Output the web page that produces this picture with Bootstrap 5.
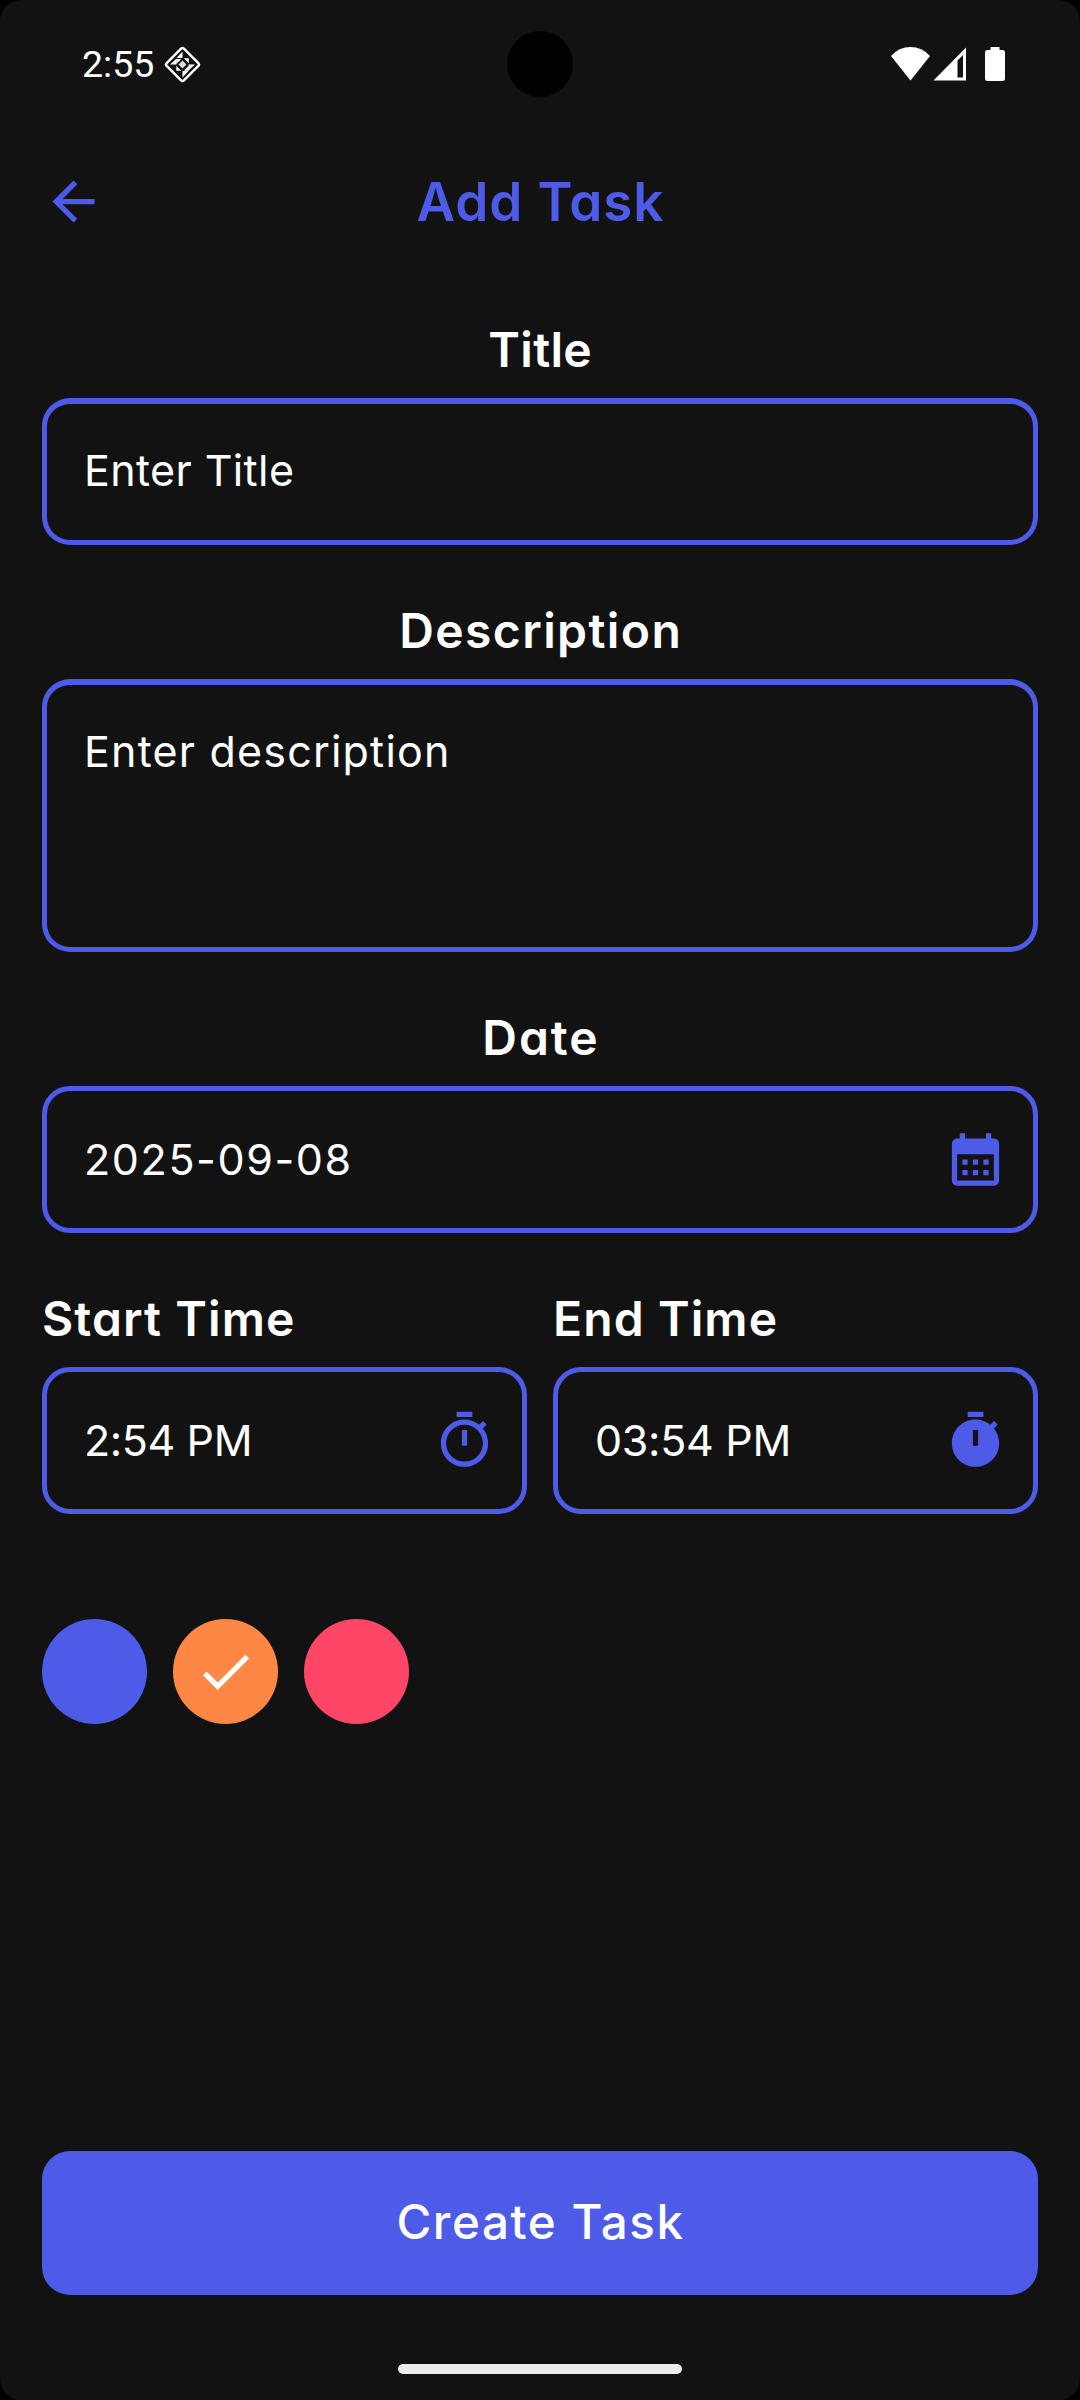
<!DOCTYPE html>
<html lang="en">
<head>
<meta charset="utf-8">
<meta name="viewport" content="width=device-width, initial-scale=1">
<title>Add Task</title>
<link href="https://cdn.jsdelivr.net/npm/bootstrap@5.3.0/dist/css/bootstrap.min.css" rel="stylesheet">
<style>
  :root { --accent: #4e5ae8; --surface: #121212; }
  html, body { background: #000; }
  body { margin: 0; font-family: Inter, "Open Sans", sans-serif; font-feature-settings: "cv11"; color: #fff; }
  .screen { width: 1080px; height: 2400px; background: var(--surface); border-radius: 21px; overflow: hidden; }
  .status-bar { height: 128px; padding: 0 75px 0 82px; }
  .clock { font: 400 37.5px/44px Roboto, sans-serif; margin-right: 9px; }
  .camera { width: 66px; height: 66px; background: #000; top: 31px; left: 507px; }
  .app-bar { height: 147px; padding: 0 42px; color: var(--accent); }
  .app-bar .side { width: 63px; }
  .app-title { font-size: 53px; font-weight: 600; line-height: 76px; letter-spacing: .9px; text-indent: .9px; }
  .task-form { padding: 41px 42px 0; }
  .field-group { margin-bottom: 52px; }
  .field-label { display: block; font-size: 48px; font-weight: 600; line-height: 68px; padding-bottom: 1px; margin-bottom: 13px; letter-spacing: var(--ls, 1.1px); }
  .text-center > .field-label { text-indent: var(--ls, 1px); }
  .field-box { height: 147px; border: 5px solid var(--accent); border-radius: 28px; padding: 0 26.5px 0 37px; }
  .field-box.tall { height: 273px; }
  .field-box.heavy { border-top-width: 6px; }
  .field-box .form-control { background: transparent; border: 0; border-radius: 0; box-shadow: none; padding: 0; margin: 0;
    color: #fff; font-size: 43px; font-weight: 370; line-height: 63px; height: 63px; letter-spacing: var(--ls, 1px); resize: none; min-width: 0; }
  .field-box .form-control::placeholder { color: #fff; opacity: 1; }
  .field-box.heavy .form-control { margin-bottom: 3px; }
  .field-box.tall .form-control { margin-top: 35px; height: 190px; overflow: hidden; }
  .icon { width: 63px; height: 63px; fill: currentColor; flex: none; display: block; }
  .accent { color: var(--accent); }
  .times { gap: 26px; margin-bottom: 105px; }
  .times > div { flex: 1 1 0; min-width: 0; }
  .swatches { gap: 26.2px; }
  .swatch { width: 105px; height: 105px; border: 0; padding: 0; color: #fff; }
  .swatch-indigo { background: #4e5ae8; }
  .swatch-orange { background: #ff8746; }
  .swatch-pink { background: #ff4667; }
  .form-actions { padding: 0 42px; margin-bottom: 69px; }
  .btn-create { height: 144px; border: 0; border-radius: 28px; background: var(--accent); color: #fff; font-size: 47.5px; font-weight: 500;
    line-height: 69px; letter-spacing: 1.6px; text-indent: 1px; padding: 0 0 3px; }
  .home-bar { width: 284px; height: 10px; border-radius: 5px; background: #ececec; margin-bottom: 26px; }
</style>
</head>
<body>
<main class="screen d-flex flex-column position-relative">

  <header class="status-bar d-flex justify-content-between">
    <div class="d-flex align-items-center">
      <span class="clock">2:55</span>
      <svg width="39" height="39" viewBox="0 0 39 39">
        <rect x="7.300" y="7.300" width="24.400" height="24.400" rx="2" transform="rotate(45 19.5 19.5)" fill="none" stroke="#fff" stroke-width="2.400"/>
        <g fill="#fff">
          <path d="M19.500 6.500v6.500h-6z M32 19.500h-6.500v6z M19.500 32.500v-6.500h6z M7 19.500h6.500v-6z"/>
          <path d="M13.300 14h5l-5 5z M20.800 13.300h5v5z M25.800 20.800v5h-5z M18.300 25.800h-5v-5z"/>
          <path d="M19.500 15.500v4h-4z M23.500 19.500h-4v-4z M19.500 23.500v-4h4z M15.500 19.500h4v4z" opacity=".85"/>
        </g>
      </svg>
    </div>
    <div class="d-flex align-items-center">
      <svg width="114" height="36" viewBox="0 0 114 36" fill="#fff">
        <path d="M0 10Q8 1 19.500 1T39 10L19.500 34.500z"/>
        <path fill-rule="evenodd" d="M42.500 34.500H75V1.500z M66.500 31.500V14.500L72 9V31.500z"/>
        <path d="M99.500 1h9v3h3q2.500 0 2.500 2.500v26q0 2.500-2.500 2.500h-15q-2.500 0-2.500-2.500v-26q0-2.500 2.500-2.500h3z"/>
      </svg>
    </div>
    <div class="camera rounded-circle position-absolute"></div>
  </header>

  <nav class="app-bar d-flex align-items-center justify-content-between">
    <svg class="icon" viewBox="0 0 24 24"><path d="M20 11H7.830l5.590-5.590L12 4l-8 8 8 8 1.410-1.410L7.830 13H20v-2z"/></svg>
    <h1 class="app-title m-0">Add Task</h1>
    <span class="side"></span>
  </nav>

  <form class="task-form">
    <div class="field-group text-center">
      <label class="field-label" for="title" style="--ls:.3px">Title</label>
      <div class="field-box heavy d-flex align-items-center">
        <input id="title" class="form-control" type="text" placeholder="Enter Title" style="--ls:.4px">
      </div>
    </div>

    <div class="field-group text-center">
      <label class="field-label" for="description" style="--ls:1.400px">Description</label>
      <div class="field-box heavy tall">
        <textarea id="description" class="form-control" placeholder="Enter description" style="--ls:1.200px"></textarea>
      </div>
    </div>

    <div class="field-group text-center">
      <label class="field-label" for="date" style="--ls:2px">Date</label>
      <div class="field-box d-flex align-items-center">
        <input id="date" class="form-control" type="text" value="2025-09-08" style="--ls:1.6px">
        <svg class="icon accent" viewBox="0 0 24 24"><path fill-rule="evenodd" d="M6 2h2v2h8V2h2v2h1c1.100 0 2 .9 2 2v14c0 1.100-.9 2-2 2H5c-1.100 0-2-.9-2-2V6c0-1.100.9-2 2-2h1V2zM5 10v10h14V10H5zM7 12h2v2H7zM11 12h2v2h-2zM15 12h2v2h-2zM7 16h2v2H7zM11 16h2v2h-2zM15 16h2v2h-2z"/></svg>
      </div>
    </div>

    <div class="times d-flex">
      <div>
        <label class="field-label" for="start">Start Time</label>
        <div class="field-box d-flex align-items-center">
          <input id="start" class="form-control" type="text" value="2:54 PM" style="--ls:-.4px">
          <svg class="icon accent" viewBox="0 0 24 24"><path d="M15 1H9v2h6V1zm-4 13h2V8h-2v6zm8.030-6.610 1.420-1.420c-.43-.51-.9-.99-1.410-1.410l-1.420 1.420C16.070 4.740 14.120 4 12 4c-4.970 0-9 4.030-9 9s4.020 9 9 9 9-4.030 9-9c0-2.120-.74-4.070-1.970-5.610zM12 20c-3.870 0-7-3.130-7-7s3.130-7 7-7 7 3.130 7 7-3.130 7-7 7z"/></svg>
        </div>
      </div>
      <div>
        <label class="field-label" for="end">End Time</label>
        <div class="field-box d-flex align-items-center">
          <input id="end" class="form-control" type="text" value="03:54 PM" style="--ls:-.3px">
          <svg class="icon accent" viewBox="0 0 24 24"><path fill-rule="evenodd" d="M15 1H9v2h6V1zM19.030 7.390l1.420-1.420c-.43-.51-.9-.99-1.410-1.410l-1.420 1.420C16.070 4.740 14.120 4 12 4c-4.970 0-9 4.030-9 9s4.020 9 9 9 9-4.030 9-9c0-2.120-.74-4.070-1.970-5.610zM11 8h2v6h-2z"/></svg>
        </div>
      </div>
    </div>

    <div class="swatches d-flex">
      <button type="button" class="swatch swatch-indigo rounded-circle" aria-label="Indigo"></button>
      <button type="button" class="swatch swatch-orange rounded-circle d-flex align-items-center justify-content-center" aria-label="Orange">
        <svg class="icon" viewBox="0 0 24 24"><path d="M9 16.170 4.830 12l-1.420 1.410L9 19 21 7l-1.410-1.410z"/></svg>
      </button>
      <button type="button" class="swatch swatch-pink rounded-circle" aria-label="Pink"></button>
    </div>
  </form>

  <div class="form-actions mt-auto">
    <button type="button" class="btn btn-create w-100">Create Task</button>
  </div>
  <div class="home-bar mx-auto"></div>
</main>
<script src="https://cdn.jsdelivr.net/npm/bootstrap@5.3.0/dist/js/bootstrap.bundle.min.js"></script>
</body>
</html>
